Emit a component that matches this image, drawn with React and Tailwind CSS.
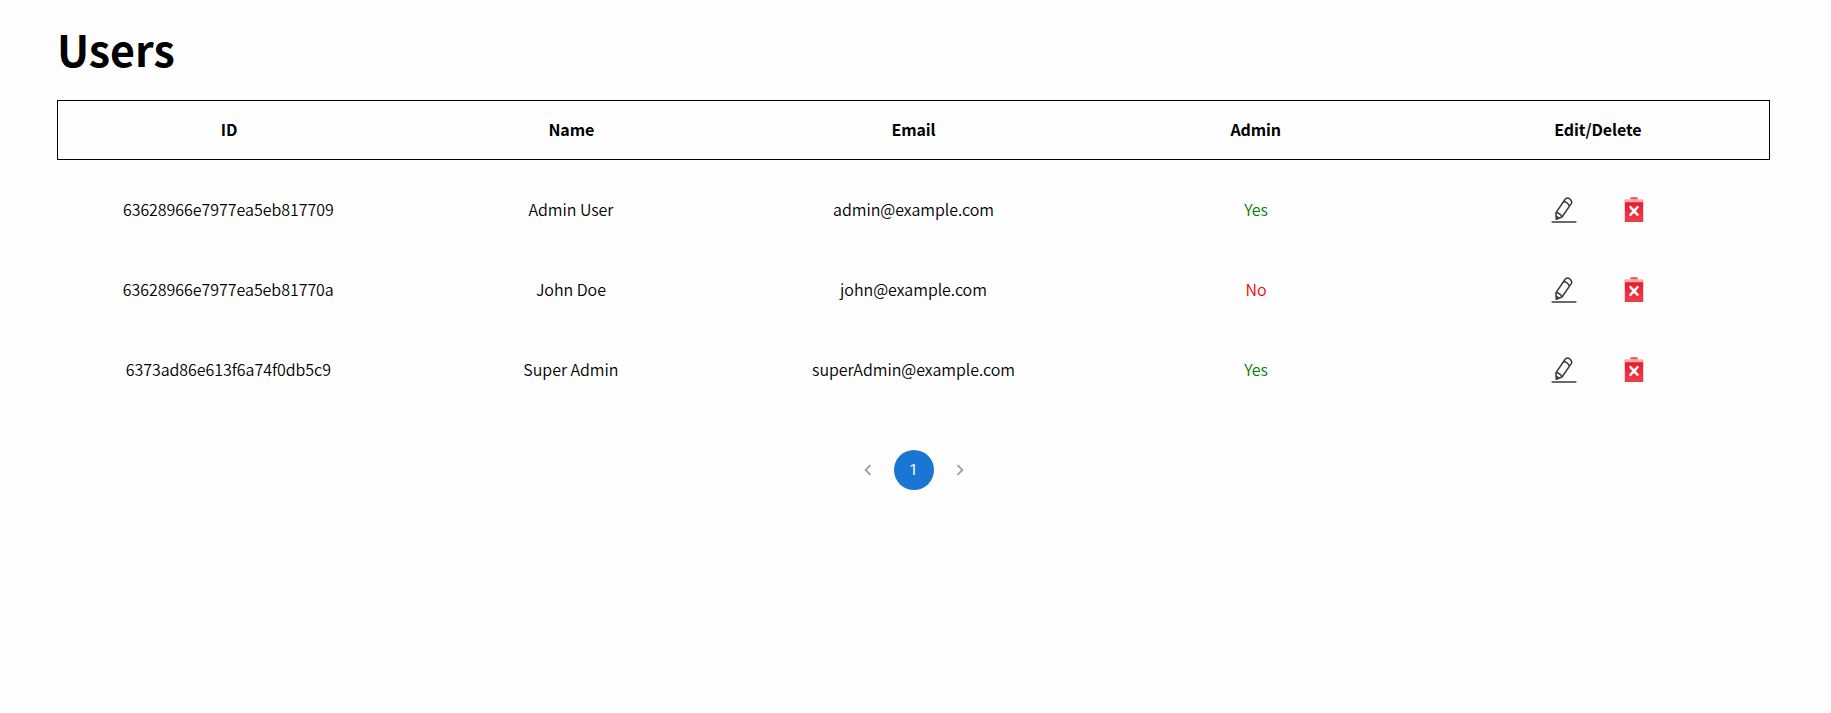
import React from "react";

const users = [
  { id: "63628966e7977ea5eb817709", name: "Admin User", email: "admin@example.com", admin: true },
  { id: "63628966e7977ea5eb81770a", name: "John Doe", email: "john@example.com", admin: false },
  { id: "6373ad86e613f6a74f0db5c9", name: "Super Admin", email: "superAdmin@example.com", admin: true },
];

const columns = ["ID", "Name", "Email", "Admin", "Edit/Delete"];

function EditIcon() {
  return (
    <svg className="h-[26px] w-[26px]" viewBox="0 0 26 26" fill="none" stroke="#3a3a3a" strokeWidth="1.5" strokeLinejoin="round">
      <path d="M5 15.6 14 2.5Q15.6 0 18.4 1.6 21.8 4 20.2 6.6L11 20 5.2 22.3Z" />
      <path d="M12.4 4.8Q16.6 5 18.4 9M5 15.6Q9.2 16 11 20M5.1 19.2 8 21.2" />
      <path d="M.6 25H25.4" stroke="#6b6b6b" strokeWidth="2" />
    </svg>
  );
}

function DeleteIcon() {
  return (
    <svg className="h-[26px] w-[26px]" viewBox="0 0 26 26">
      <defs>
        <linearGradient id="bin" x1="0" y1="0" x2="0" y2="1">
          <stop offset="0" stopColor="#e61b2f" />
          <stop offset="1" stopColor="#f23d4e" />
        </linearGradient>
      </defs>
      <path d="M9.2 2.6V1.6Q9.2.3 10.5.3H15.5Q16.8.3 16.8 1.6V2.6Z" fill="#f04a59" />
      <path d="M3.8 5V24.4Q3.8 25 4.4 25H21.6Q22.2 25 22.2 24.4V5Z" fill="url(#bin)" />
      <path d="M3.4 5.2V3.2Q3.4 2.2 4.4 2.2H21.6Q22.6 2.2 22.6 3.2V5.2Z" fill="#fca9a8" />
      <path d="m9.4 10.2 7.2 7.6m0-7.6-7.2 7.6" stroke="#fff" strokeWidth="2.5" strokeLinecap="round" />
    </svg>
  );
}

function Arrow({ next }) {
  return (
    <button className="flex size-10 items-center justify-center" aria-label={next ? "Next page" : "Previous page"}>
      <svg className="size-[22px]" viewBox="0 0 24 24" fill="#9e9e9e">
        {next ? (
          <path d="M10 6 8.59 7.41 13.17 12l-4.58 4.59L10 18l6-6z" />
        ) : (
          <path d="M15.41 7.41 14 6l-6 6 6 6 1.41-1.41L10.83 12z" />
        )}
      </svg>
    </button>
  );
}

export default function App() {
  return (
    <main className="min-h-screen bg-[#fefefe] pr-[61px] pl-[57px] pt-[17px] font-['Noto_Sans_CJK_JP','Noto_Sans',sans-serif] text-base text-black">
      <h1 className="flex h-[62px] items-center text-[43px] font-bold">Users</h1>
      <div className="mt-[21px] grid h-[60px] grid-cols-5 items-center border border-black pb-0.5 text-center font-bold tracking-[-0.1px]">
        {columns.map((column) => (
          <span key={column}>{column}</span>
        ))}
      </div>
      <div className="pt-[10px]">
        {users.map((user) => (
          <div key={user.id} className="grid h-20 grid-cols-5 items-center text-center font-[350] tracking-[-0.04px]">
            <span className="pb-0.5">{user.id}</span>
            <span className="pb-0.5">{user.name}</span>
            <span className="pb-0.5">{user.email}</span>
            <span className={user.admin ? "pb-0.5 text-[#008000]" : "pb-0.5 text-[#ff0000]"}>{user.admin ? "Yes" : "No"}</span>
            <div className="flex items-center justify-center gap-11">
              <button aria-label="Edit"><EditIcon /></button>
              <button aria-label="Delete"><DeleteIcon /></button>
            </div>
          </div>
        ))}
      </div>
      <nav className="mt-10 flex items-center justify-center gap-[6px]">
        <Arrow />
        <button className="flex size-10 items-center justify-center rounded-full bg-[#1976d2] pt-px font-[Roboto,sans-serif] text-[15px] font-normal text-white">1</button>
        <Arrow next />
      </nav>
    </main>
  );
}
